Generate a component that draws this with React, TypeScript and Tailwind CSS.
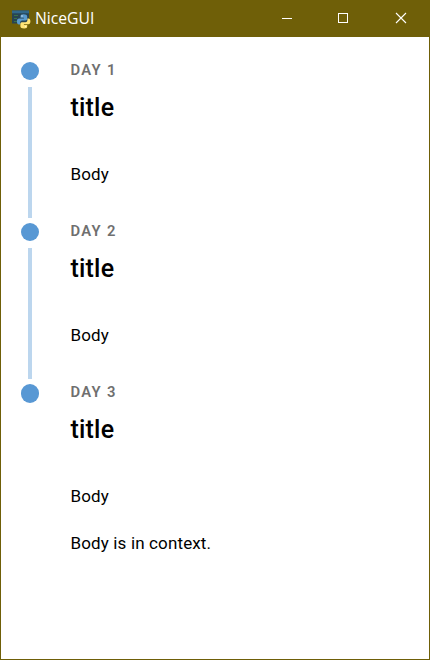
type Entry = { day: string; title: string; body: string[] };

const entries: Entry[] = [
  { day: "Day 1", title: "title", body: ["Body"] },
  { day: "Day 2", title: "title", body: ["Body"] },
  { day: "Day 3", title: "title", body: ["Body", "Body is in context."] },
];

function AppIcon() {
  return (
    <svg width="19" height="20" viewBox="0 0 19 20" className="shrink-0">
      <path d="M0 1.5h17v13H0z" fill="#284452" />
      <path d="M0 1.5h17v2.8H0z" fill="#31688a" />
      <path d="M2 6.5h4M2 9.5h3M2 12.5h3" stroke="#397349" strokeWidth="1" />
      <path
        d="M11.5 5.2c-2.4 0-3 .8-3 2v1.6h3.4v.6H7.1c-1.4 0-2.2 1.2-2.2 3s.8 3 2 3h1.3v-1.9c0-1.2.9-2 2-2h3.2c1 0 1.8-.7 1.8-1.7V7.2c0-1.2-1.2-2-3.7-2z"
        fill="#5a9bce"
      />
      <path
        d="M12.2 19.4c2.4 0 3-.8 3-2v-1.5h-3.3v-.6h4.5c1.4 0 2-1.2 2-3s-.8-2.9-2-2.9h-1v1.8c0 1.2-.9 2-2 2h-3.2c-1 0-1.8.7-1.8 1.7v2.5c0 1.2 1.3 2 3.8 2z"
        fill="#ffe477"
      />
      <circle cx="10" cy="7" r=".7" fill="#e8f2f8" />
      <circle cx="13.6" cy="17.6" r=".7" fill="#fff8d8" />
    </svg>
  );
}

function TitleBar() {
  return (
    <header className="flex h-[37px] shrink-0 items-start bg-[#6f5f08] text-white">
      <div className="flex h-[37px] items-center gap-[4px] pl-3">
        <AppIcon />
        <span className="-mt-px font-['Open_Sans','Noto_Sans',sans-serif] text-[15.7px] leading-5">NiceGUI</span>
      </div>
      <div className="ml-auto flex">
        <svg width="57" height="37" fill="none" stroke="white" shapeRendering="crispEdges">
          <path d="M22 18.5h10" />
        </svg>
        <svg width="58" height="37" fill="none" stroke="white" shapeRendering="crispEdges">
          <path d="M21.5 13.5h9v9h-9z" />
        </svg>
        <svg width="55" height="37" fill="none" stroke="white">
          <path d="M21 13l10 10M31 13l-10 10" strokeWidth="1.1" />
        </svg>
      </div>
    </header>
  );
}

function TimelineEntry({ entry, last }: { entry: Entry; last: boolean }) {
  return (
    <li className="flex min-h-[161px]">
      <div className="flex w-[18px] flex-col items-center">
        <span className={`${last ? "h-[19px]" : "h-[18px]"} w-[18px] shrink-0 rounded-full bg-[#5898d4]`} />
        {!last && <span className="mt-[7px] h-[131px] w-1 bg-[#bcd6ee]" />}
      </div>
      <div className="ml-[31.5px]">
        <div className="-mt-px text-[14.8px] font-semibold uppercase leading-[18px] tracking-[1.3px] text-[#6f6f6f]">
          {entry.day}
        </div>
        <h6 className="mt-[9px] text-[25px] font-medium leading-10 tracking-[0.2px]">{entry.title}</h6>
        <div className="mt-[33px] flex flex-col gap-[21px]">
          {entry.body.map((text) => (
            <div key={text} className="text-[17px] leading-[26px] tracking-[0.14px]">
              {text}
            </div>
          ))}
        </div>
      </div>
    </li>
  );
}

export default function App() {
  return (
    <div className="flex h-[660px] w-[430px] flex-col overflow-hidden bg-[#6f5f08] font-[Roboto,sans-serif]">
      <TitleBar />
      <main className="mx-px mb-px grow bg-white pl-5 pt-[25px] text-black">
        <ul>
          {entries.map((entry, i) => (
            <TimelineEntry key={entry.day} entry={entry} last={i === entries.length - 1} />
          ))}
        </ul>
      </main>
    </div>
  );
}
